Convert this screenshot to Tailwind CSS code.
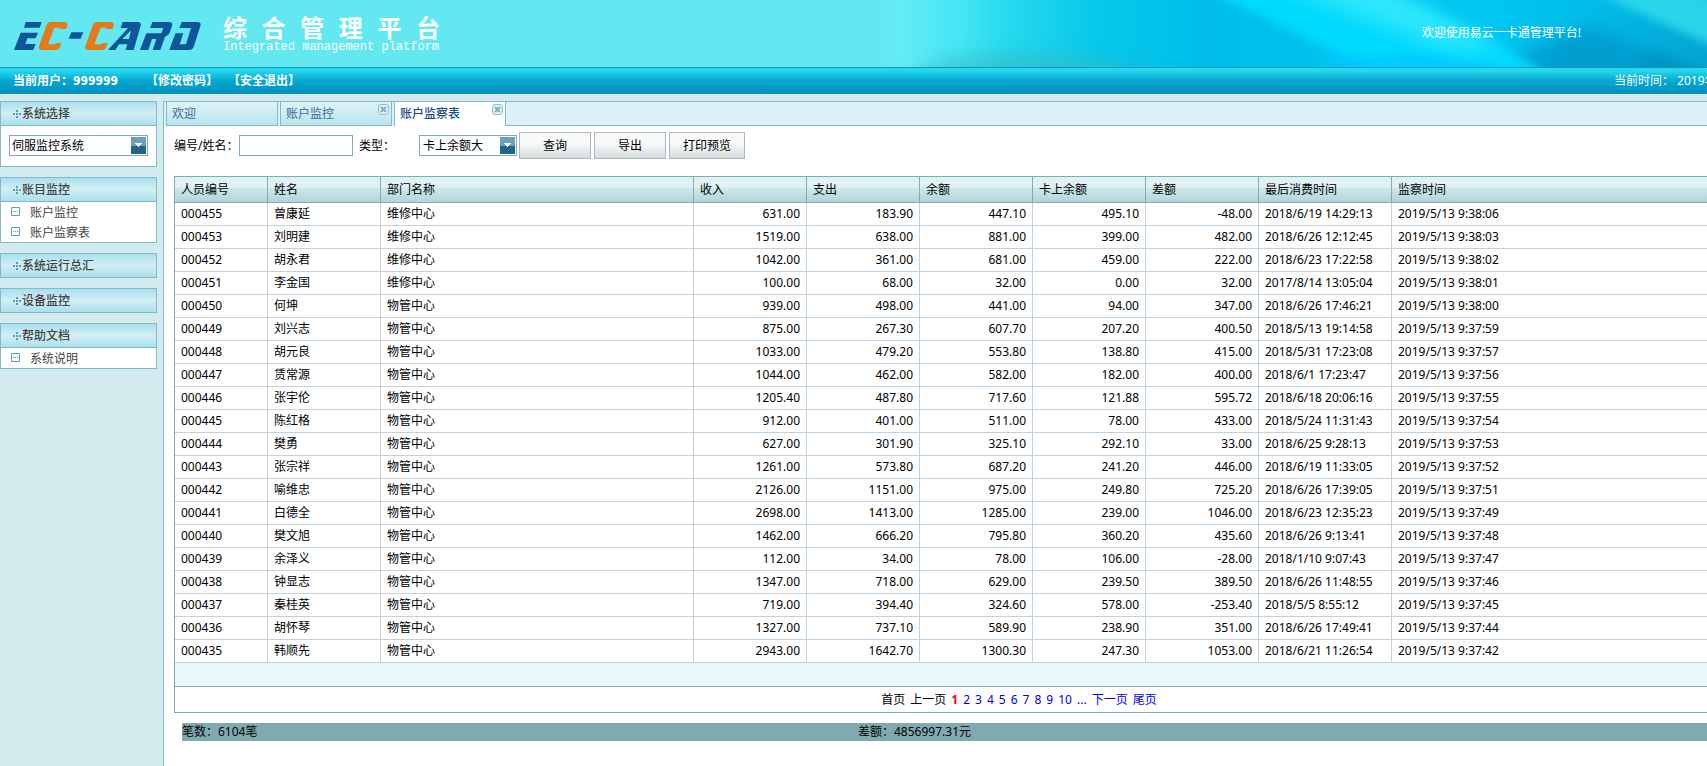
<!DOCTYPE html>
<html lang="zh-CN">
<head>
<meta charset="utf-8">
<title>综合管理平台</title>
<script src="https://cdn.jsdelivr.net/npm/@tailwindcss/browser@4"></script>
</head>
<body class="overflow-x-hidden bg-[#d3ebee] font-['Noto_Sans','Noto_Sans_CJK_SC',sans-serif] text-xs text-black">
<svg class="hidden">
  <symbol id="dots" viewBox="0 0 8 8"><path fill="#5a9fb4" d="M3 0h2v2H3zM0 3h2v2H0zM3 3h2v2H3zM6 3h2v2H6zM3 6h2v2H3z"/></symbol>
  <symbol id="node" viewBox="0 0 9 9"><path fill="#fff" stroke="#5a9fb4" d="M.5.5h8v8h-8z"/><path fill="#5a9fb4" d="M2 4h1v1H2zM4 4h1v1H4zM6 4h1v1H6z"/></symbol>
  <symbol id="close" viewBox="0 0 11 11"><rect x=".5" y=".5" width="10" height="10" rx="2.5" fill="#e4f3f7" stroke="#8cbfca"/><path stroke="#7db3c1" stroke-width="2.2" d="M3 3l5 5M8 3l-5 5"/></symbol>
  <symbol id="arrow" viewBox="0 0 15 17"><path fill="#fff" d="M4 6h7v1h-1v1H9v1H8v1H7V9H6V8H5V7H4z"/></symbol>
</svg>
<div class="flex min-h-screen min-w-[1872px] flex-col">
  <header>
    <div class="relative flex h-[67px] overflow-hidden bg-[#63e8f2]">
      <svg class="absolute top-0 left-[880px] h-[67px] w-[992px]" viewBox="0 0 992 67" preserveAspectRatio="none" aria-hidden="true">
        <defs>
          <linearGradient id="sea"><stop offset="0" stop-color="#63e8f2"/><stop offset=".02" stop-color="#63ecf5"/><stop offset=".08" stop-color="#45e6f5"/><stop offset=".13" stop-color="#25d9ee"/><stop offset=".22" stop-color="#06c8e9"/><stop offset=".33" stop-color="#00bdec"/><stop offset=".6" stop-color="#00c8f2"/><stop offset=".72" stop-color="#00bce8"/><stop offset=".83" stop-color="#05a5d2"/><stop offset="1" stop-color="#0aa6cf"/></linearGradient>
          <filter id="soft" x="-30%" y="-60%" width="160%" height="220%"><feGaussianBlur stdDeviation="9"/></filter>
          <filter id="fine" x="-20%" y="-50%" width="140%" height="200%"><feGaussianBlur stdDeviation="4"/></filter>
        </defs>
        <path fill="url(#sea)" d="M0 0h992v67H0z"/>
        <path fill="#30b8c4" fill-opacity=".6" filter="url(#soft)" d="M20 85L60 60Q180 38 300 85z"/>
        <path fill="#009fd0" filter="url(#soft)" d="M590 85L640 55L710 25L860 85z"/>
        <path fill="#00d9fe" filter="url(#fine)" d="M325-10H500Q600 28 670 75H500Q420 35 325-10z"/>
        <path fill="#00cbff" fill-opacity=".8" filter="url(#fine)" d="M440 58L560 52L660 75H480z"/>
        <path fill="#3aeafc" fill-opacity=".8" filter="url(#soft)" d="M385-20H500L620 50H570Q470 15 385-20z"/>
        <path fill="#2fdcee" fill-opacity=".85" filter="url(#fine)" d="M716-8h100q60 22 110 60v30Q800 35 716-8z"/>
        <path fill="#0094c6" fill-opacity=".8" filter="url(#fine)" d="M745 80L765 52Q800 55 840 80z"/>
      </svg>
      <svg class="mt-[22px] ml-[14px] h-[28px] w-[187px] shrink-0" viewBox="42 66 561 84" role="img" aria-label="EC-CARD">
        <g fill="#0f5699" fill-rule="evenodd">
          <path d="M77 66H125L119 83H72zM62 98H114L107 115H82L76 132H107L100 150H42z"/>
          <path d="M214 97H250L242 116H206z"/>
          <path d="M368 66H413Q425 66 422 78L401 150H377L382 133H357L346 150H324L384 84H362zM367 117H387L393 91z"/>
          <path d="M457 66H506Q520 66 516 78L509 98Q506 106 497 109Q495 111 493 116L481 150H458L469 117H456L445 150H420L439 100H484L490 84H450z"/>
          <path d="M545 66H591Q605 66 601 78L581 141Q578 150 566 150H508L526 100H550L539 133H558L573 84H538z"/>
        </g>
        <g fill="#e67a1b">
          <path id="orangeC" d="M151 66H193Q205 66 202 77L198 87H179L181 83H163L144 133H165L168 129H184L180 141Q177 150 166 150H127Q114 150 117 139L140 74Q143 66 151 66z"/>
          <use href="#orangeC" x="139"/>
        </g>
      </svg>
      <div class="relative mt-[14px] ml-[22px] w-[217px] text-white">
        <h1 class="flex justify-between font-['Noto_Sans_CJK_SC',sans-serif] text-2xl leading-[26px] font-bold"><span>综</span><span>合</span><span>管</span><span>理</span><span>平</span><span>台</span></h1>
        <p class="font-['Liberation_Mono',monospace] text-xs leading-[14px]">Integrated management platform</p>
      </div>
      <p class="relative mt-6 mr-[291px] ml-auto leading-[18px] text-white">欢迎使用易云一卡通管理平台!</p>
    </div>
    <div class="flex h-[27px] items-center border-y border-[#1593b0] bg-linear-to-b from-[#25d8ef] from-10% via-[#06a9d2] via-50% to-[#0090c2] pl-[13px] text-white">
      <span class="font-['DejaVu_Sans_Condensed','Noto_Sans_CJK_SC',sans-serif] font-bold">当前用户：999999</span>
      <a href="#" class="ml-7 font-bold">【修改密码】</a>
      <a href="#" class="ml-[10px] font-bold">【安全退出】</a>
      <span class="ml-auto w-[258px] whitespace-pre">当前时间： 2019年5月13日</span>
    </div>
  </header>

  <div class="flex flex-1 pt-[7px]">
    <nav class="mr-[6px] flex w-[157px] shrink-0 flex-col gap-[10px] text-[#444]">
      <section>
        <h2 class="flex h-[25px] items-center border border-[#84b9c7] bg-linear-to-b from-[#a9dfee] via-[#d3eef4] to-[#a9dfee] pl-3 font-medium"><svg class="mr-px size-2"><use href="#dots"/></svg>系统选择</h2>
        <div class="border border-t-0 border-[#84b9c7] bg-white pt-[9px] pb-[10px] pl-2">
          <div class="relative w-[139px]">
            <select aria-label="系统选择" class="block h-[21px] w-full appearance-none border border-[#7fadb2] bg-white pl-[2px] text-xs text-black"><option>伺服监控系统</option></select>
            <svg class="pointer-events-none absolute top-[2px] right-[2px] h-[17px] w-[15px] bg-linear-to-b from-[#6c9fb9] from-50% to-[#1f6688] to-50%"><use href="#arrow"/></svg>
          </div>
        </div>
      </section>
      <section>
        <h2 class="flex h-[25px] items-center border border-[#84b9c7] bg-linear-to-b from-[#a9dfee] via-[#d3eef4] to-[#a9dfee] pl-3 font-medium"><svg class="mr-px size-2"><use href="#dots"/></svg>账目监控</h2>
        <ul class="border border-t-0 border-[#84b9c7] bg-white pl-[10px] leading-[22px]">
          <li class="flex h-5 gap-[10px]"><svg class="mt-[5px] size-[9px]"><use href="#node"/></svg><a href="#">账户监控</a></li>
          <li class="flex h-5 gap-[10px]"><svg class="mt-[5px] size-[9px]"><use href="#node"/></svg><a href="#">账户监察表</a></li>
        </ul>
      </section>
      <section><h2 class="flex h-[25px] items-center border border-[#84b9c7] bg-linear-to-b from-[#a9dfee] via-[#d3eef4] to-[#a9dfee] pl-3 font-medium"><svg class="mr-px size-2"><use href="#dots"/></svg>系统运行总汇</h2></section>
      <section><h2 class="flex h-[25px] items-center border border-[#84b9c7] bg-linear-to-b from-[#a9dfee] via-[#d3eef4] to-[#a9dfee] pl-3 font-medium"><svg class="mr-px size-2"><use href="#dots"/></svg>设备监控</h2></section>
      <section>
        <h2 class="flex h-[25px] items-center border border-[#84b9c7] bg-linear-to-b from-[#a9dfee] via-[#d3eef4] to-[#a9dfee] pl-3 font-medium"><svg class="mr-px size-2"><use href="#dots"/></svg>帮助文档</h2>
        <ul class="border border-t-0 border-[#84b9c7] bg-white pl-[10px] leading-[22px]">
          <li class="flex h-5 gap-[10px]"><svg class="mt-[5px] size-[9px]"><use href="#node"/></svg><a href="#">系统说明</a></li>
        </ul>
      </section>
    </nav>

    <main class="min-w-0 flex-1 border-t border-l border-[#84b9c7] bg-white">
      <div class="flex h-[24px] gap-[2px] bg-[#dcf0f7] pl-[2px] text-[#3a689c]">
        <div class="flex w-[112px] border-x border-b border-[#84b9c7] bg-linear-to-b from-[#e0f3f9] to-[#b9e5ef] pl-[5px] leading-6"><a href="#">欢迎</a></div>
        <div class="flex w-[112px] justify-between border-x border-b border-[#84b9c7] bg-linear-to-b from-[#e0f3f9] to-[#b9e5ef] pr-[2px] pl-[5px] leading-6"><a href="#">账户监控</a><button aria-label="关闭" class="mt-[2px] size-[11px]"><svg class="size-[11px]"><use href="#close"/></svg></button></div>
        <div class="flex w-[112px] justify-between border-x border-[#84b9c7] bg-white pr-[2px] pl-[5px] leading-6 text-[#1c4b87]"><a href="#" class="font-medium">账户监察表</a><button aria-label="关闭" class="mt-[2px] size-[11px]"><svg class="size-[11px]"><use href="#close"/></svg></button></div>
        <div class="-mx-[2px] flex-1 border-b border-[#84b9c7]"></div>
      </div>

      <form class="flex items-center pt-[6px] pl-[10px]">
        <label for="who" class="w-[65px]">编号/姓名：</label>
        <input id="who" class="h-[21px] w-[114px] border border-[#7fadb2] bg-white px-1">
        <label for="kind" class="ml-[6px] w-[60px]">类型：</label>
        <div class="relative w-[98px]">
          <select id="kind" class="block h-[21px] w-full appearance-none border border-[#7fadb2] bg-white pl-[3px]"><option>卡上余额大</option></select>
          <svg class="pointer-events-none absolute top-[2px] right-[2px] h-[17px] w-[15px] bg-linear-to-b from-[#6c9fb9] from-50% to-[#1f6688] to-50%"><use href="#arrow"/></svg>
        </div>
        <div class="ml-[2px] flex gap-[3px]">
          <button type="button" class="h-[27px] w-[72px] border border-[#adb9be] bg-linear-to-b from-[#f8f9f9] from-40% to-[#d7dddf]">查询</button>
          <button type="button" class="h-[27px] w-[72px] border border-[#adb9be] bg-linear-to-b from-[#f8f9f9] from-40% to-[#d7dddf]">导出</button>
          <button type="button" class="h-[27px] w-[76px] border border-[#adb9be] bg-linear-to-b from-[#f8f9f9] from-40% to-[#d7dddf]">打印预览</button>
        </div>
      </form>

      <div class="mt-[17px] mr-2 ml-[10px] border border-[#7fadb2]">
        <table class="w-full table-fixed border-separate border-spacing-0">
          <colgroup><col class="w-[93px]"><col class="w-[113px]"><col class="w-[313px]"><col class="w-[113px]"><col class="w-[113px]"><col class="w-[113px]"><col class="w-[113px]"><col class="w-[113px]"><col class="w-[133px]"><col></colgroup>
          <thead>
            <tr id="head" class="bg-linear-to-b from-[#dff1f3] from-40% via-[#cde9eb] via-42% to-[#b1d3d8]"></tr>
          </thead>
          <tbody id="rows"></tbody>
        </table>
        <div class="h-[23px] bg-[#e8f7fc]"></div>
        <div class="flex h-[26px] items-center justify-center gap-[5px] border-t border-[#7fadb2] text-[#00e]">
          <span class="text-black">首页</span><span class="text-black">上一页</span><b class="text-[#f00]">1</b>
          <a href="#">2</a><a href="#">3</a><a href="#">4</a><a href="#">5</a><a href="#">6</a><a href="#">7</a><a href="#">8</a><a href="#">9</a><a href="#">10</a><a href="#">...</a><a href="#">下一页</a><a href="#">尾页</a>
        </div>
      </div>
      <div class="mt-[10px] ml-[18px] flex h-[18px] items-center bg-[#80aab0]">
        <span class="w-2/5">笔数：6104笔</span><span>差额：4856997.31元</span>
      </div>
    </main>
  </div>
</div>
<script>
const heads = ['人员编号','姓名','部门名称','收入','支出','余额','卡上余额','差额','最后消费时间','监察时间'];
const data = `000455|曾康延|维修中心|631.00|183.90|447.10|495.10|-48.00|2018/6/19 14:29:13|2019/5/13 9:38:06
000453|刘明建|维修中心|1519.00|638.00|881.00|399.00|482.00|2018/6/26 12:12:45|2019/5/13 9:38:03
000452|胡永君|维修中心|1042.00|361.00|681.00|459.00|222.00|2018/6/23 17:22:58|2019/5/13 9:38:02
000451|李金国|维修中心|100.00|68.00|32.00|0.00|32.00|2017/8/14 13:05:04|2019/5/13 9:38:01
000450|何坤|物管中心|939.00|498.00|441.00|94.00|347.00|2018/6/26 17:46:21|2019/5/13 9:38:00
000449|刘兴志|物管中心|875.00|267.30|607.70|207.20|400.50|2018/5/13 19:14:58|2019/5/13 9:37:59
000448|胡元良|物管中心|1033.00|479.20|553.80|138.80|415.00|2018/5/31 17:23:08|2019/5/13 9:37:57
000447|赁常源|物管中心|1044.00|462.00|582.00|182.00|400.00|2018/6/1 17:23:47|2019/5/13 9:37:56
000446|张宇伦|物管中心|1205.40|487.80|717.60|121.88|595.72|2018/6/18 20:06:16|2019/5/13 9:37:55
000445|陈红格|物管中心|912.00|401.00|511.00|78.00|433.00|2018/5/24 11:31:43|2019/5/13 9:37:54
000444|樊勇|物管中心|627.00|301.90|325.10|292.10|33.00|2018/6/25 9:28:13|2019/5/13 9:37:53
000443|张宗祥|物管中心|1261.00|573.80|687.20|241.20|446.00|2018/6/19 11:33:05|2019/5/13 9:37:52
000442|喻维忠|物管中心|2126.00|1151.00|975.00|249.80|725.20|2018/6/26 17:39:05|2019/5/13 9:37:51
000441|白德全|物管中心|2698.00|1413.00|1285.00|239.00|1046.00|2018/6/23 12:35:23|2019/5/13 9:37:49
000440|樊文旭|物管中心|1462.00|666.20|795.80|360.20|435.60|2018/6/26 9:13:41|2019/5/13 9:37:48
000439|余泽义|物管中心|112.00|34.00|78.00|106.00|-28.00|2018/1/10 9:07:43|2019/5/13 9:37:47
000438|钟显志|物管中心|1347.00|718.00|629.00|239.50|389.50|2018/6/26 11:48:55|2019/5/13 9:37:46
000437|秦桂英|物管中心|719.00|394.40|324.60|578.00|-253.40|2018/5/5 8:55:12|2019/5/13 9:37:45
000436|胡怀琴|物管中心|1327.00|737.10|589.90|238.90|351.00|2018/6/26 17:49:41|2019/5/13 9:37:44
000435|韩顺先|物管中心|2943.00|1642.70|1300.30|247.30|1053.00|2018/6/21 11:26:54|2019/5/13 9:37:42`;
document.getElementById('head').innerHTML = heads.map(h =>
  `<th class="h-[26px] border-r border-b border-[#7fadb2] px-[6px] py-0 text-left leading-4 font-normal last:border-r-0">${h}</th>`).join('');
document.getElementById('rows').innerHTML = data.split('\n').map(r => '<tr>' + r.split('|').map((c, i) =>
  i > 2 && i < 8
    ? `<td class="h-[23px] border-r border-b border-[#c0d2db] px-[6px] py-0 text-right leading-4">${c}</td>`
    : `<td class="h-[23px] border-r border-b border-[#c0d2db] px-[6px] py-0 leading-4 last:border-r-0">${c}</td>`).join('') + '</tr>').join('');
</script>
</body>
</html>
